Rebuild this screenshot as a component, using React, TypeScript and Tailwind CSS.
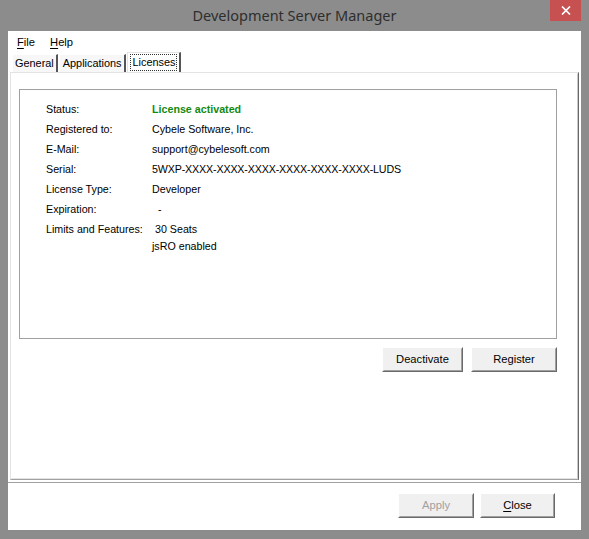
import * as React from 'react';

const rows: { label: string; value: React.ReactNode }[] = [
    { label: "Status:", value: <span className="font-bold text-[#138a13]">License activated</span> },
    { label: "Registered to:", value: "Cybele Software, Inc." },
    { label: "E-Mail:", value: "support@cybelesoft.com" },
    { label: "Serial:", value: <span className="tracking-[-0.15px]">5WXP-XXXX-XXXX-XXXX-XXXX-XXXX-XXXX-LUDS</span> },
    { label: "License Type:", value: "Developer" },
    { label: "Expiration:", value: <span className="pl-[6px]">-</span> },
];

function ClassicButton({ label, width, disabled }: { label: React.ReactNode; width: string; disabled?: boolean }) {
    return (
        <button
            className={`${width} h-[25px] border border-t-white border-l-white border-r-[#696969] border-b-[#696969] bg-[#f0f0f0] p-0`}
        >
            <div className="h-full w-full border border-t-[#f0f0f0] border-l-[#f0f0f0] border-r-[#a0a0a0] border-b-[#a0a0a0] flex items-center justify-center">
                <span className={disabled ? "text-[#a0a0a0]" : "text-black"}>{label}</span>
            </div>
        </button>
    );
}

export default function App() {
    return (
        <div className="w-[589px] h-[539px] bg-[#8c8c8c] flex flex-col" style={{ fontFamily: '"Liberation Sans", Arial, sans-serif' }}>
            {/* title bar */}
            <div className="h-[31px] grid grid-cols-[1fr_auto_1fr] items-start">
                <div />
                <div className="pt-[4px] text-[14.5px] text-[#2e2e2e] leading-[22px]" style={{ fontFamily: '"Noto Sans", "Open Sans", sans-serif' }}>
                    Development Server Manager
                </div>
                <div className="flex justify-end pr-[8px]">
                    <div className="w-[31px] h-[21px] bg-[#c75050] flex items-center justify-center">
                        <svg width="10" height="9" viewBox="0 0 10 9">
                            <path d="M1 0.5 L9 8.5 M9 0.5 L1 8.5" stroke="white" strokeWidth="1.7" />
                        </svg>
                    </div>
                </div>
            </div>

            {/* client area */}
            <div className="mx-[8px] h-[499px] bg-white flex flex-col text-[10.7px] text-black">
                {/* menu */}
                <div className="h-[21px] flex items-center gap-[15px] pl-[9px] pt-[2px] text-[11.2px]">
                    <span><span className="underline underline-offset-2">F</span>ile</span>
                    <span><span className="underline underline-offset-2">H</span>elp</span>
                </div>

                {/* tabs */}
                <div className="h-[20px] flex items-end pl-[4px] text-[10.9px]">
                    <div className="h-[18px] px-[2px] flex items-center bg-[#f7f7f7] border-l border-t border-white border-r-2 border-r-[#555]">
                        General
                    </div>
                    <div className="h-[18px] ml-[1px] px-[3px] flex items-center bg-[#f7f7f7] border-l border-t border-white border-r-2 border-r-[#555]">
                        Applications
                    </div>
                    <div className="h-[20px] ml-[1px] px-[2px] pt-[1px] flex items-start bg-white border-l border-t border-[#e3e3e3] border-r-2 border-r-[#555]">
                        <span className="px-[1px] leading-[15px] border border-dotted border-[#333]">Licenses</span>
                    </div>
                </div>

                {/* tab page */}
                <div className="mx-[2px] h-[408px] border border-t-[#e3e3e3] border-l-[#e3e3e3] border-r-[#696969] border-b-[#a0a0a0]">
                    <div className="h-full border border-t-white border-l-white border-r-[#c8c8c8] border-b-[#e3e3e3] pl-[7px] pt-[15px]">
                        <div className="w-[538px] h-[250px] border border-[#a0a0a0] pl-[26px] pt-[9px]">
                            {rows.map((r) => (
                                <div key={r.label} className="flex leading-[20px]">
                                    <div className="w-[106px]">{r.label}</div>
                                    <div>{r.value}</div>
                                </div>
                            ))}
                            <div className="flex leading-[20px]">
                                <div className="w-[106px]">Limits and Features:</div>
                                <div>
                                    <div className="pl-[3px]">30 Seats</div>
                                    <div className="-mt-[3px]">jsRO enabled</div>
                                </div>
                            </div>
                        </div>
                        <div className="w-[538px] mt-[8px] flex justify-end gap-[8px] text-[11.2px]">
                            <ClassicButton label="Deactivate" width="w-[81px]" />
                            <ClassicButton label="Register" width="w-[86px]" />
                        </div>
                    </div>
                </div>

                {/* bottom bar */}
                <div className="mt-[2px] flex-1 border-t border-[#a0a0a0] flex justify-end gap-[6px] pr-[26px] pt-[10px] text-[11.2px]">
                    <ClassicButton label="Apply" width="w-[76px]" disabled />
                    <ClassicButton label={<><span className="underline underline-offset-2">C</span>lose</>} width="w-[75px]" />
                </div>
            </div>
        </div>
    );
}
